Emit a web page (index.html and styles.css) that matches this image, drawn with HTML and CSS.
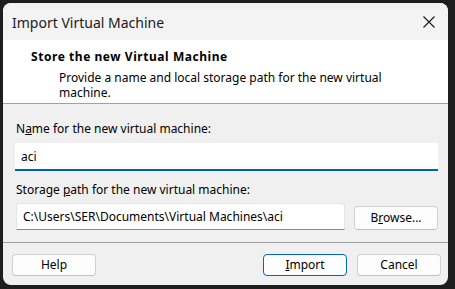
FILE: index.html
```html
<!DOCTYPE html>
<html>
<head>
<meta charset="utf-8">
<link rel="stylesheet" href="styles.css">
</head>
<body>
<div class="window">
  <div class="titlebar">
    <span class="title">Import Virtual Machine</span>
    <svg class="close" width="12" height="12" viewBox="0 0 12 12"><path d="M0.5 0.5L11.5 11.5M11.5 0.5L0.5 11.5" stroke="#1a1a1a" stroke-width="1.1" fill="none"/></svg>
  </div>
  <div class="header">
    <div class="h-title">Store the new Virtual Machine</div>
    <div class="h-sub">Provide a name and local storage path for the new virtual machine.</div>
  </div>
  <div class="content">
    <div class="label">N<u>a</u>me for the new virtual machine:</div>
    <div class="name-input">aci</div>
    <div class="label label2">Storage <u>p</u>ath for the new virtual machine:</div>
    <div class="path-row">
      <div class="path-input">C:\Users\SER\Documents\Virtual Machines\aci</div>
      <div class="btn browse">B<u>r</u>owse...</div>
    </div>
  </div>
  <div class="footer">
    <div class="btn">Help</div>
    <div class="spacer"></div>
    <div class="btn primary"><u>I</u>mport</div>
    <div class="btn">Cancel</div>
  </div>
</div>
</body>
</html>
```

FILE: styles.css
```css
html, body {
  margin: 0;
  padding: 0;
}
body {
  background: #1e1e1e;
  width: 455px;
  height: 289px;
  padding: 3px 0 0 3px;
  box-sizing: border-box;
  font-family: "Noto Sans", "Open Sans", sans-serif;
  font-size: 12px;
  color: #000;
}
.window {
  width: 445px;
  height: 282px;
  border-radius: 8px;
  overflow: hidden;
  background: #f0f0f0;
  display: flex;
  flex-direction: column;
}
.titlebar {
  height: 37px;
  background: #f3f3f3;
  display: flex;
  align-items: center;
  padding: 0 12px 0 9px;
  flex-shrink: 0;
}
.title {
  flex: 1;
  font-size: 14px;
  color: #1a1a1a;
  padding-top: 1px;
}
.close {
  display: block;
  margin-right: 1px;
}
.header {
  background: #ffffff;
  height: 64px;
  box-sizing: border-box;
  border-bottom: 1px solid #a0a0a0;
  padding: 9px 20px 0 28px;
  flex-shrink: 0;
}
.h-title {
  font-weight: bold;
  line-height: 16px;
  letter-spacing: 0.55px;
}
.h-sub {
  margin-left: 28px;
  margin-top: 5px;
  line-height: 15px;
  width: 340px;
}
.content {
  height: 139px;
  box-sizing: border-box;
  border-bottom: 1px solid #a0a0a0;
  padding: 17px 10px 0 12px;
  flex-shrink: 0;
}
.label {
  line-height: 15px;
  padding-left: 1px;
}
.name-input {
  margin-top: 7px;
  height: 28px;
  box-sizing: border-box;
  background: #fff;
  border-bottom: 2px solid #005fb8;
  padding: 6px 0 0 6px;
  line-height: 15px;
}
.label2 {
  margin-top: 11px;
}
.path-row {
  display: flex;
  align-items: center;
  margin-top: 6px;
  gap: 9px;
}
.path-input {
  width: 329px;
  height: 27px;
  box-sizing: border-box;
  background: #fff;
  border: 1px solid #e5e5e5;
  border-bottom-color: #8a8a8a;
  border-radius: 3px 3px 0 0;
  padding: 5px 0 0 6px;
  line-height: 15px;
  margin-left: 1px;
}
.btn {
  width: 84px;
  height: 22px;
  box-sizing: border-box;
  background: #fdfdfd;
  border: 1px solid #d0d0d0;
  border-bottom-color: #c0c0c0;
  border-radius: 4px;
  text-align: center;
  line-height: 19px;
  color: #000;
}
.browse {
  height: 24px;
  line-height: 21px;
  margin-top: 2px;
}
.footer {
  display: flex;
  align-items: flex-start;
  padding: 11px 7px 0 9px;
  gap: 10px;
}
.spacer {
  flex: 1;
}
.primary {
  border: 1px solid #0067c0;
}
```
